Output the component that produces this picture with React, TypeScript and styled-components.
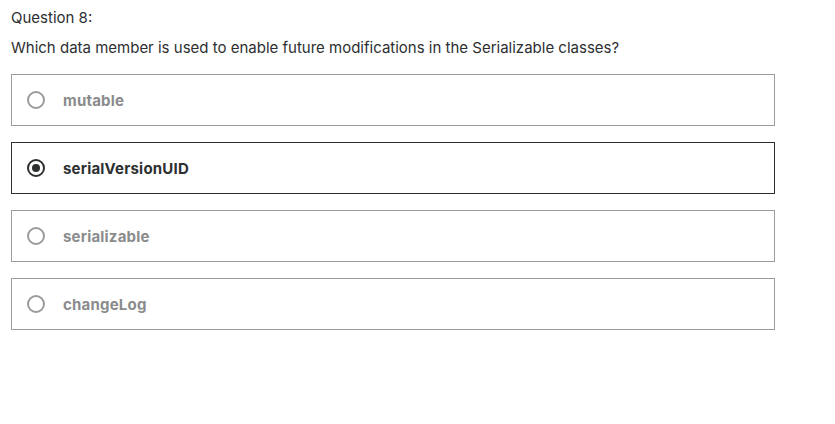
import React from "react";
import styled, { createGlobalStyle } from "styled-components";

const Global = createGlobalStyle`
  html, body { margin: 0; padding: 0; background: #fff; }
  body { font-family: "Inter", "Liberation Sans", sans-serif; color: #2d2f31; }
`;

const Page = styled.div`
  padding: 7px 0 0 11px;
  width: 764px;
`;

const Label = styled.div`
  font-size: 15px;
  line-height: 22px;
  margin-bottom: 8px;
`;

const Prompt = styled.div`
  font-size: 15px;
  line-height: 22px;
  margin-bottom: 15px;
`;

const List = styled.div`
  display: flex;
  flex-direction: column;
  gap: 16px;
`;

const Option = styled.div<{ $selected?: boolean }>`
  display: flex;
  align-items: center;
  gap: 18px;
  height: 52px;
  box-sizing: border-box;
  padding: 0 15px;
  border: 1px solid ${(p) => (p.$selected ? "#2d2f31" : "#9a9b9c")};
  color: ${(p) => (p.$selected ? "#2d2f31" : "#8a8b8c")};
  font-weight: 700;
  font-size: 15px;
  letter-spacing: 0.2px;
`;

const Radio = styled.span<{ $selected?: boolean }>`
  width: 18px;
  height: 18px;
  flex: none;
  box-sizing: border-box;
  border-radius: 50%;
  border: 2px solid ${(p) => (p.$selected ? "#2d2f31" : "#9a9b9c")};
  display: flex;
  align-items: center;
  justify-content: center;
  &::after {
    content: "";
    display: ${(p) => (p.$selected ? "block" : "none")};
    width: 8px;
    height: 8px;
    border-radius: 50%;
    background: #2d2f31;
  }
`;

const options = ["mutable", "serialVersionUID", "serializable", "changeLog"];

export default function App() {
  return (
    <>
      <Global />
      <Page>
        <Label>Question 8:</Label>
        <Prompt>Which data member is used to enable future modifications in the Serializable classes?</Prompt>
        <List>
          {options.map((o, i) => (
            <Option key={o} $selected={i === 1}>
              <Radio $selected={i === 1} />
              {o}
            </Option>
          ))}
        </List>
      </Page>
    </>
  );
}
